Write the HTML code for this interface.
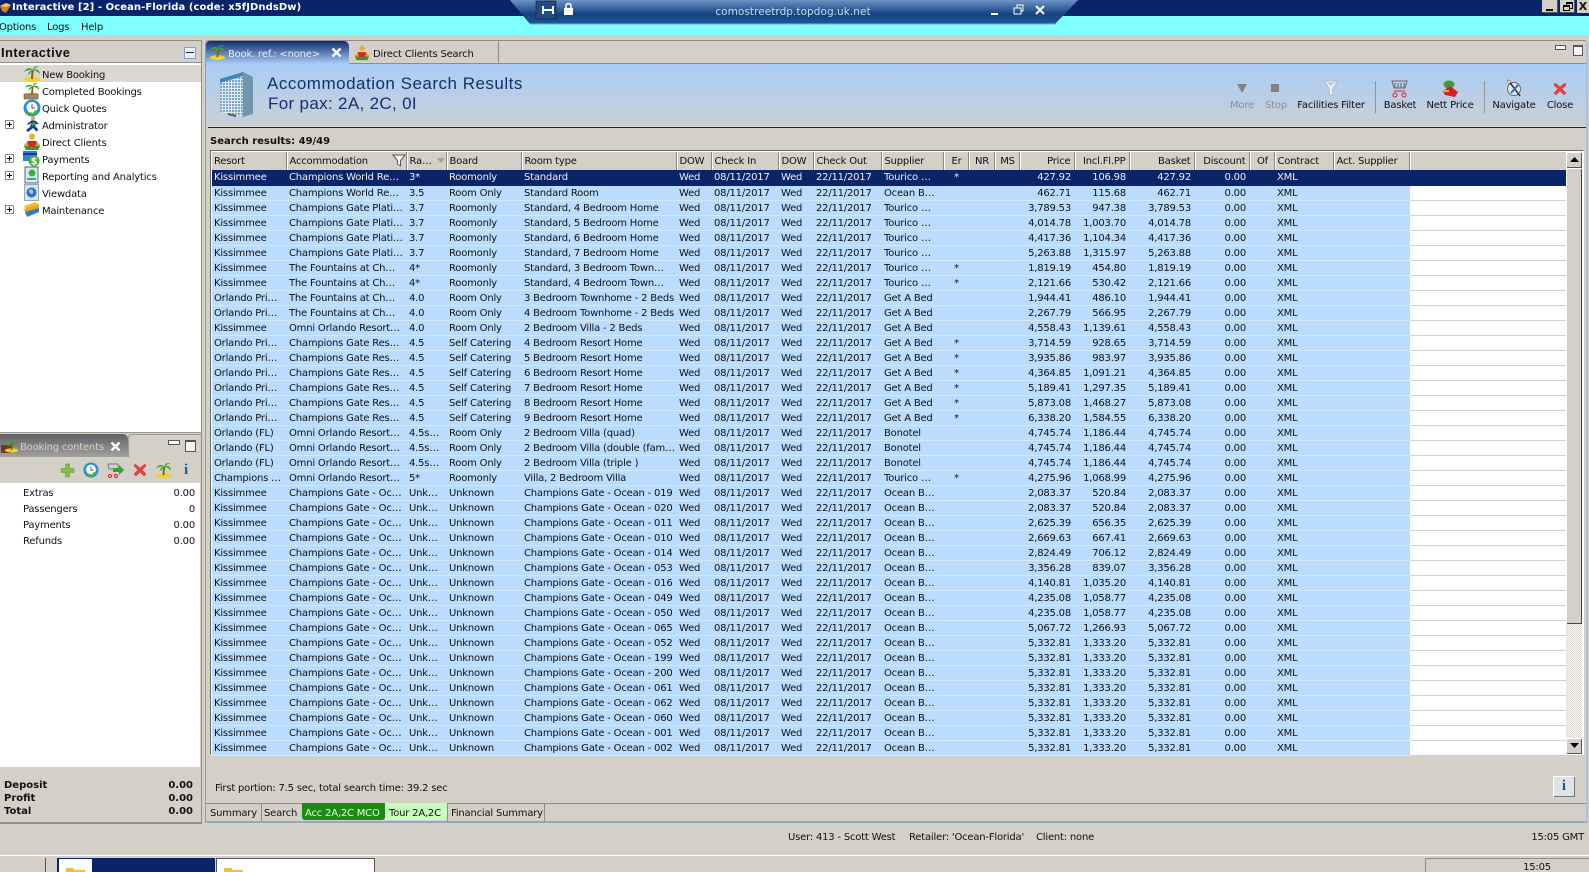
<!DOCTYPE html>
<html><head><meta charset="utf-8"><title>Interactive</title>
<style>
html,body{margin:0;padding:0;width:1589px;height:872px;overflow:hidden;background:#d4d0c8}
body{position:relative;font:10px/13px "DejaVu Sans","Liberation Sans",sans-serif;color:#111;letter-spacing:-.2px}
.a{position:absolute;white-space:nowrap}
.b{font-weight:bold;letter-spacing:0}
.c{transform:translateX(-50%)}
.r{text-align:right}
svg{position:absolute;overflow:visible}
#t{position:absolute;left:212px;top:152px;width:1355px;border-collapse:collapse;table-layout:fixed;font-size:10px}
#t th{height:18px;padding:4px 0 0 2px;line-height:12px;vertical-align:top;font-weight:normal;text-align:left;background:#d4d0c8;border-right:1px solid #fff;box-shadow:inset -1px 0 0 #8a8880;box-sizing:border-box;overflow:hidden;white-space:nowrap}
#t td{height:15px;padding:2px 0 0 2px;line-height:12px;vertical-align:top;background:#b9dcff;border-bottom:1px solid #d5e8fb;box-sizing:border-box;overflow:hidden;white-space:nowrap}
#t td:nth-child(11){text-align:center;padding-left:0}
#t td:nth-child(n+14):nth-child(-n+17),#t th:nth-child(n+14):nth-child(-n+17){text-align:right;padding-right:4px}
#t td:nth-child(21){background:#fff;border-bottom:1px solid #d4d0c8}
#t tr.s td{background:#0a246a!important;color:#f0f0f0;border-bottom-color:#0a246a}
</style></head><body>
<svg width="0" height="0" style="position:absolute"><defs>
<symbol id="palm" viewBox="0 0 18 18"><ellipse cx="9" cy="15.500" rx="8" ry="2.500" fill="#f3d21c"/><path d="M9 15C9 11 9.500 8 10 6" stroke="#8a5a20" stroke-width="2" fill="none"/><path d="M10 6C7 3 3 4 1 8 4 6 7 6 10 6ZM10 6C10 3 13 1 16 3 13 3 12 4 10 6ZM10 6C13 4 17 6 17 10 15 8 13 7 10 6ZM10 6C8 6 5 8 5 11 7 9 9 8 10 6Z" fill="#3fa62a"/></symbol>
<symbol id="person" viewBox="0 0 18 18"><circle cx="9" cy="3.500" r="3" fill="#f0a830"/><path d="M1 13C1 7 17 7 17 13L15 17H3Z" fill="#e8a020"/><path d="M4 8H14L12 14H6Z" fill="#d82818"/><path d="M1 13H6L9 15 12 13H17L15 17H3Z" fill="#2f9a3a"/></symbol>
<symbol id="clock" viewBox="0 0 18 18"><circle cx="9" cy="9" r="8.500" fill="#2f8fd8"/><circle cx="9" cy="8.500" r="5.500" fill="#fff"/><path d="M9 5V9H12" stroke="#555" fill="none"/><path d="M3 13C6 17.500 12 17.500 15.500 12.500L12.500 11 10 14 6 13Z" fill="#4db030"/></symbol>
<symbol id="x" viewBox="0 0 14 14"><path d="M2 1L7 5 12 1 13 3 9 7 13 11 11 13 7 9 3 13 1 11 5 7 1 3Z" fill="#e84040" stroke="#c83030" stroke-width=".5"/></symbol>
<symbol id="folder" viewBox="0 0 20 16"><path d="M0 3H7L9 5H19V16H0Z" fill="#eac23c"/><path d="M1 7H20L18 16H0Z" fill="#fbe07a"/></symbol>
<pattern id="win" width="3" height="3" patternUnits="userSpaceOnUse"><rect width="3" height="3" fill="#dfeaf2"/><rect width="2" height="2" fill="#7aa5c4"/></pattern>
</defs></svg>

<!-- title bar -->
<div class="a" style="left:0;top:0;width:1589px;height:16px;background:#0a246a"></div>
<svg style="left:0;top:1px" width="12" height="13"><path d="M0 5L6 2 11 4 6 12 2 10Z" fill="#d87a20"/><path d="M0 5L6 2 11 4 6 6Z" fill="#f2c070"/></svg>
<div class="a b" style="left:12px;top:1px;color:#fff;font-size:10px;line-height:13px;letter-spacing:.08px">Interactive [2] - Ocean-Florida (code: x5fJDndsDw)</div>
<div class="a" style="left:1542px;top:0;width:16px;height:13px;background:#d4d0c8;box-shadow:inset -1px -1px #555"><div class="a" style="left:4px;top:9px;width:7px;height:2px;background:#000"></div></div>
<div class="a" style="left:1560px;top:0;width:15px;height:13px;background:#d4d0c8;box-shadow:inset -1px -1px #555"><div class="a" style="left:6px;top:2px;width:5px;height:4px;border:1px solid #000;border-top-width:2px"></div><div class="a" style="left:3px;top:5px;width:5px;height:3px;border:1px solid #000;border-top-width:2px;background:#d4d0c8"></div></div>
<div class="a b" style="left:1577px;top:0;width:12px;height:13px;background:#d4d0c8;font-size:11px;line-height:13px;text-align:center">X</div>

<!-- menu -->
<div class="a" style="left:0;top:16px;width:1589px;height:19px;background:#80ffff"></div>
<div class="a" style="left:-1px;top:21px">Options</div>
<div class="a" style="left:47px;top:21px">Logs</div>
<div class="a" style="left:81px;top:21px">Help</div>

<!-- connection bar -->
<svg style="left:0;top:0" width="1589" height="26"><defs><linearGradient id="cb" x1="0" y1="0" x2="0" y2="1"><stop offset="0" stop-color="#6d92c4"/><stop offset=".6" stop-color="#134080"/><stop offset="1" stop-color="#1d5a98"/></linearGradient></defs><path d="M510 0H1078L1055 24H530Z" fill="url(#cb)"/><path d="M530 24H1055" stroke="#8ab" stroke-width="1"/><rect x="536" y="1" width="20" height="18" fill="#234a86" stroke="#123" stroke-width=".6"/><path d="M543 6V14M553 6V14M543 10H553" stroke="#fff" stroke-width="2"/><rect x="564" y="8" width="9" height="7" fill="#fff"/><path d="M566 8V5.500C566 3 571 3 571 5.500V8" stroke="#fff" stroke-width="1.500" fill="none"/><path d="M991 14H998" stroke="#fff" stroke-width="2"/><path d="M1014 8H1021V14H1014Z" fill="none" stroke="#fff"/><path d="M1017 8V5H1023V11H1021" fill="none" stroke="#fff"/><path d="M1036 6L1044 14M1044 6L1036 14" stroke="#fff" stroke-width="2"/></svg>
<div class="a c" style="left:793px;top:6px;color:#c8daf0;font-size:10.5px;letter-spacing:.05px">comostreetrdp.topdog.uk.net</div>

<!-- left panel -->
<div class="a" style="left:0;top:40px;width:201px;height:23px;background:#d4d0c8;border-top:1px solid #8f8d86;border-bottom:1px solid #8f8d86;box-sizing:border-box"></div>
<div class="a" style="left:0;top:63px;width:201px;height:371px;background:#fff"></div>
<div class="a" style="left:201px;top:40px;width:1px;height:783px;background:#8f8d86"></div>
<div class="a b" style="left:1px;top:45px;font-size:13px;line-height:16px;color:#111;font-family:'Liberation Sans',sans-serif;letter-spacing:.4px">Interactive</div>
<div class="a" style="left:184px;top:47px;width:10px;height:10px;border:1px solid #7ea0c8;background:#e8eef5"><div class="a" style="left:1px;top:4px;width:8px;height:1px;background:#222"></div></div>
<div class="a" style="left:0;top:65px;width:201px;height:17px;background:#dbd8d1"></div>
<svg style="left:23px;top:64px" width="18" height="18"><use href="#palm" width="18" height="18"/></svg>
<svg style="left:23px;top:81px" width="18" height="18"><use href="#palm" width="18" height="16"/><rect x="1" y="13" width="14" height="5" fill="#a08a60" stroke="#444" stroke-width=".5"/></svg>
<svg style="left:23px;top:99px" width="18" height="18"><use href="#clock" width="18" height="18"/></svg>
<svg style="left:25px;top:116px" width="15" height="17"><path d="M7 4L11 5 14 8 11 8 10 10 13 13 12 16 8 12 3 16 1 14 5 11 6 7 3 9 2 8Z" fill="#1a3f90"/><path d="M6 7L10 6 11 9 7 10Z" fill="#3f9a3a"/><circle cx="8" cy="2.500" r="2" fill="#e0a070"/></svg>
<svg style="left:23px;top:133px" width="18" height="18"><use href="#person" width="18" height="18"/></svg>
<svg style="left:23px;top:150px" width="17" height="17"><rect x="0" y="1" width="14" height="10" fill="#2f7fd8"/><rect x="0" y="3" width="14" height="2" fill="#0f3f90"/><circle cx="11" cy="11" r="5.500" fill="#4db030"/><text x="11" y="14.500" font-size="10" text-anchor="middle" fill="#fff" font-weight="bold">$</text></svg>
<svg style="left:24px;top:167px" width="15" height="17"><rect x="1" y="0" width="13" height="16" fill="#dfe8f2" stroke="#567"/><circle cx="8" cy="6" r="3.500" fill="#3fae3f"/><rect x="3" y="11" width="9" height="2" fill="#3a7"/></svg>
<svg style="left:24px;top:184px" width="15" height="17"><rect x=".5" y=".5" width="14" height="16" fill="#d8e2ee" stroke="#9aa"/><circle cx="7.500" cy="8.500" r="5" fill="#2f70c0"/><path d="M5 6C7 4 10 6 9 9 7 11 5 9 5 6Z" fill="#a0c8e8"/></svg>
<svg style="left:23px;top:201px" width="17" height="17"><path d="M1 5L12 1 16 3 3 8Z" fill="#f0c030"/><path d="M1 8L16 3V9L3 14Z" fill="#e8a820"/><path d="M2 11L16 7V11L4 16Z" fill="#2f80c0"/></svg>
<div class="a" style="left:42px;top:69px">New Booking</div>
<div class="a" style="left:42px;top:86px">Completed Bookings</div>
<div class="a" style="left:42px;top:103px">Quick Quotes</div>
<div class="a" style="left:42px;top:120px">Administrator</div>
<div class="a" style="left:42px;top:137px">Direct Clients</div>
<div class="a" style="left:42px;top:154px">Payments</div>
<div class="a" style="left:42px;top:171px">Reporting and Analytics</div>
<div class="a" style="left:42px;top:188px">Viewdata</div>
<div class="a" style="left:42px;top:205px">Maintenance</div>
<svg style="left:5px;top:120px" width="9" height="95"><g fill="#fff" stroke="#8a8a8a"><rect x=".5" y=".5" width="8" height="8"/><rect x=".5" y="34.500" width="8" height="8"/><rect x=".5" y="51.500" width="8" height="8"/><rect x=".5" y="85.500" width="8" height="8"/></g><path d="M2 4.500H7M4.500 2V7M2 38.500H7M4.500 36V41M2 55.500H7M4.500 53V58M2 89.500H7M4.500 87V92" stroke="#000"/></svg>

<!-- booking contents -->
<div class="a" style="left:0;top:432px;width:201px;height:51px;background:#d4d0c8;border-top:1px solid #9a9890;box-sizing:border-box"></div>
<div class="a" style="left:0;top:434px;width:128px;height:23px;background:linear-gradient(#5e6066,#a3a29e);border-radius:0 5px 0 0"></div>
<div class="a" style="left:128px;top:434px;width:73px;height:23px;border-top:1px solid #9a9890;border-left:1px solid #9a9890;box-sizing:border-box;border-radius:4px 0 0 0"></div>
<svg style="left:1px;top:437px" width="17" height="17"><rect x="0" y="8" width="10" height="8" fill="#6a3a1a"/><use href="#palm" x="3" y="0" width="15" height="16"/></svg>
<div class="a" style="left:20px;top:441px;color:#d4d0c8">Booking contents</div>
<svg style="left:110px;top:441px" width="11" height="11"><path d="M1.500 1.500L9.500 9.500M9.500 1.500L1.500 9.500" stroke="#fff" stroke-width="2.500"/></svg>
<div class="a" style="left:168px;top:440px;width:10px;height:3px;border:1px solid #555;background:#fff"></div>
<div class="a" style="left:185px;top:440px;width:9px;height:9px;border:1px solid #555;border-top-width:2px;background:#f5f5f5"></div>
<svg style="left:61px;top:464px" width="13" height="13"><path d="M4.500 0H8.500V4.500H13V8.500H8.500V13H4.500V8.500H0V4.500H4.500Z" fill="#7fbf4a" stroke="#5f8f3a" stroke-width=".5"/></svg>
<svg style="left:83px;top:462px" width="16" height="16"><use href="#clock" width="16" height="16"/></svg>
<svg style="left:107px;top:463px" width="17" height="15"><path d="M1 1H11V6H2Z" fill="none" stroke="#777"/><circle cx="3" cy="13" r="1.500" fill="none" stroke="#d22"/><circle cx="9" cy="13" r="1.500" fill="none" stroke="#d22"/><path d="M6 5H12V2L17 7 12 12V9H6Z" fill="#2da52d"/></svg>
<svg style="left:133px;top:463px" width="14" height="14"><use href="#x" width="14" height="14"/></svg>
<svg style="left:155px;top:461px" width="17" height="17"><use href="#palm" width="17" height="17"/></svg>
<div class="a b" style="left:184px;top:462px;font:bold 15px/16px 'Liberation Serif',serif;color:#1560a8">i</div>
<div class="a" style="left:0;top:483px;width:200px;height:284px;background:#fff"></div>
<div class="a" style="left:23px;top:487px">Extras</div><div class="a r" style="right:1394px;top:487px">0.00</div>
<div class="a" style="left:23px;top:503px">Passengers</div><div class="a r" style="right:1394px;top:503px">0</div>
<div class="a" style="left:23px;top:519px">Payments</div><div class="a r" style="right:1394px;top:519px">0.00</div>
<div class="a" style="left:23px;top:535px">Refunds</div><div class="a r" style="right:1394px;top:535px">0.00</div>
<div class="a b" style="left:4px;top:779px">Deposit</div><div class="a b r" style="right:1396px;top:779px">0.00</div>
<div class="a b" style="left:4px;top:792px">Profit</div><div class="a b r" style="right:1396px;top:792px">0.00</div>
<div class="a b" style="left:4px;top:805px">Total</div><div class="a b r" style="right:1396px;top:805px">0.00</div>
<div class="a" style="left:0;top:822px;width:202px;height:2px;background:#8f8d86"></div>

<!-- right panel -->
<div class="a" style="left:205px;top:40px;width:1383px;height:783px;border:1px solid #8f9db5;border-top-color:#8f8d86;border-right:2px solid #a4c2e4;border-bottom:2px solid #93a8c4;box-sizing:border-box;border-radius:4px 4px 0 0"></div>
<div class="a" style="left:206px;top:63px;width:1380px;height:1px;background:#8f8d86"></div>
<div class="a" style="left:206px;top:41px;width:143px;height:23px;background:linear-gradient(#0f2c70,#a9cdf6);border-radius:4px 5px 0 0"></div>
<div class="a" style="left:498px;top:41px;width:1px;height:22px;background:#8f8d86"></div>
<svg style="left:209px;top:43px" width="17" height="17"><use href="#palm" width="17" height="17"/></svg>
<div class="a" style="left:228px;top:48px;color:#e8eef8">Book. ref.: &lt;none&gt;</div>
<svg style="left:331px;top:47px" width="11" height="11"><path d="M1.500 1.500L9.500 9.500M9.500 1.500L1.500 9.500" stroke="#fff" stroke-width="2.500"/></svg>
<svg style="left:354px;top:45px" width="16" height="16"><use href="#person" width="16" height="16"/></svg>
<div class="a" style="left:373px;top:48px">Direct Clients Search</div>
<div class="a" style="left:1555px;top:45px;width:9px;height:3px;border:1px solid #555;background:#fff"></div>
<div class="a" style="left:1573px;top:45px;width:8px;height:8px;border:1px solid #555;border-top-width:2px;background:#f5f5f5"></div>

<div class="a" style="left:206px;top:64px;width:1380px;height:62px;background:linear-gradient(#a9cdf6,#c9cfd6)"></div>
<div class="a" style="left:208px;top:127px;width:1378px;height:1px;background:#0a246a"></div>
<svg style="left:220px;top:71px" width="34" height="48"><path d="M0 8L23 1V46L0 41Z" fill="url(#win)"/><path d="M0 8L23 1V5L0 12Z" fill="#3f86b8"/><path d="M23 1L33 6V43L23 46Z" fill="#6f96ae"/><path d="M8 42L16 44V46L8 44Z" fill="#556"/></svg>
<div class="a" style="left:267px;top:74px;font:17px/20px 'Liberation Sans',sans-serif;color:#15306f;letter-spacing:.5px">Accommodation Search Results</div>
<div class="a" style="left:268px;top:94px;font:17px/20px 'Liberation Sans',sans-serif;color:#15306f;letter-spacing:.33px">For pax: 2A, 2C, 0I</div>

<svg style="left:1236px;top:83px" width="12" height="11"><path d="M1 1H11L6 10Z" fill="#7f8488"/></svg>
<div class="a" style="left:1271px;top:84px;width:8px;height:8px;background:#7f8488"></div>
<svg style="left:1324px;top:80px" width="14" height="18"><path d="M1 2L7 0 13 2 8.500 9V16L5.500 14V9Z" fill="#eef1f4" stroke="#aeb4ba" stroke-width=".7"/><path d="M3 3L7 1 11 3 7 6Z" fill="#c4ccd4"/></svg>
<svg style="left:1391px;top:80px" width="18" height="18"><path d="M1 1H16L14 8H3Z" fill="none" stroke="#666"/><path d="M4 3V8M7 3V8M10 3V8M13 3V8" stroke="#666"/><path d="M3 11H14" stroke="#d22"/><circle cx="4" cy="15" r="2" fill="none" stroke="#d22"/><circle cx="13" cy="15" r="2" fill="none" stroke="#d22"/></svg>
<svg style="left:1441px;top:80px" width="18" height="18"><ellipse cx="8" cy="4.500" rx="5.500" ry="4" fill="#3f9a3a"/><path d="M2 11L9 6 17 12 14 17 4 15Z" fill="#d81c2c"/><rect x="3" y="10" width="5" height="2" fill="#f0b020"/></svg>
<svg style="left:1505px;top:79px" width="18" height="19"><circle cx="9" cy="10" r="6.500" fill="#dfe8f0" stroke="#667"/><path d="M3 1L15 17" stroke="#333" stroke-width="1.500"/><path d="M13 6L6 14" stroke="#2a70c8" stroke-width="2"/><path d="M2 1L6 2 4 5Z" fill="#eee" stroke="#666" stroke-width=".5"/></svg>
<svg style="left:1553px;top:82px" width="14" height="14"><use href="#x" width="14" height="14"/></svg>
<div class="a c" style="left:1242px;top:99px;color:#8a8e92">More</div>
<div class="a c" style="left:1276px;top:99px;color:#8a8e92">Stop</div>
<div class="a c" style="left:1331px;top:99px">Facilities Filter</div>
<div class="a" style="left:1375px;top:81px;width:1px;height:32px;background:#8f949a"></div>
<div class="a c" style="left:1400px;top:99px">Basket</div>
<div class="a c" style="left:1450px;top:99px">Nett Price</div>
<div class="a" style="left:1484px;top:81px;width:1px;height:32px;background:#8f949a"></div>
<div class="a c" style="left:1514px;top:99px">Navigate</div>
<div class="a c" style="left:1560px;top:99px">Close</div>

<div class="a b" style="left:210px;top:135px">Search results: 49/49</div>

<!-- table -->
<div class="a" style="left:210px;top:150px;width:1374px;height:605px;background:#fff;border:1px solid #6a6a64;border-right-color:#fff;border-bottom-color:#fff;box-sizing:border-box"></div>
<table id="t">
<colgroup><col style="width:75px"><col style="width:120px"><col style="width:40px"><col style="width:75px"><col style="width:155px"><col style="width:35px"><col style="width:67px"><col style="width:35px"><col style="width:68px"><col style="width:62px"><col style="width:25px"><col style="width:26px"><col style="width:25px"><col style="width:55px"><col style="width:55px"><col style="width:65px"><col style="width:55px"><col style="width:25px"><col style="width:59px"><col style="width:76px"><col style="width:157px"></colgroup>
<thead><tr><th>Resort</th><th>Accommodation</th><th>Ra…</th><th>Board</th><th>Room type</th><th>DOW</th><th>Check In</th><th>DOW</th><th>Check Out</th><th>Supplier</th><th style="text-align:center;padding-left:0">Er</th><th style="text-align:center;padding-left:0">NR</th><th style="text-align:center;padding-left:0">MS</th><th>Price</th><th>Incl.Fl.PP</th><th>Basket</th><th>Discount</th><th style="text-align:center;padding-left:0">Of</th><th>Contract</th><th>Act. Supplier</th><th></th></tr></thead>
<tbody>
<tr class="s"><td>Kissimmee<td>Champions World Re…<td>3*<td>Roomonly<td>Standard<td>Wed<td>08/11/2017<td>Wed<td>22/11/2017<td>Tourico …<td>*<td><td><td>427.92<td>106.98<td>427.92<td>0.00<td><td>XML<td><td></tr>
<tr><td>Kissimmee<td>Champions World Re…<td>3.5<td>Room Only<td>Standard Room<td>Wed<td>08/11/2017<td>Wed<td>22/11/2017<td>Ocean B…<td><td><td><td>462.71<td>115.68<td>462.71<td>0.00<td><td>XML<td><td></tr>
<tr><td>Kissimmee<td>Champions Gate Plati…<td>3.7<td>Roomonly<td>Standard, 4 Bedroom Home<td>Wed<td>08/11/2017<td>Wed<td>22/11/2017<td>Tourico …<td><td><td><td>3,789.53<td>947.38<td>3,789.53<td>0.00<td><td>XML<td><td></tr>
<tr><td>Kissimmee<td>Champions Gate Plati…<td>3.7<td>Roomonly<td>Standard, 5 Bedroom Home<td>Wed<td>08/11/2017<td>Wed<td>22/11/2017<td>Tourico …<td><td><td><td>4,014.78<td>1,003.70<td>4,014.78<td>0.00<td><td>XML<td><td></tr>
<tr><td>Kissimmee<td>Champions Gate Plati…<td>3.7<td>Roomonly<td>Standard, 6 Bedroom Home<td>Wed<td>08/11/2017<td>Wed<td>22/11/2017<td>Tourico …<td><td><td><td>4,417.36<td>1,104.34<td>4,417.36<td>0.00<td><td>XML<td><td></tr>
<tr><td>Kissimmee<td>Champions Gate Plati…<td>3.7<td>Roomonly<td>Standard, 7 Bedroom Home<td>Wed<td>08/11/2017<td>Wed<td>22/11/2017<td>Tourico …<td><td><td><td>5,263.88<td>1,315.97<td>5,263.88<td>0.00<td><td>XML<td><td></tr>
<tr><td>Kissimmee<td>The Fountains at Ch…<td>4*<td>Roomonly<td>Standard, 3 Bedroom Town…<td>Wed<td>08/11/2017<td>Wed<td>22/11/2017<td>Tourico …<td>*<td><td><td>1,819.19<td>454.80<td>1,819.19<td>0.00<td><td>XML<td><td></tr>
<tr><td>Kissimmee<td>The Fountains at Ch…<td>4*<td>Roomonly<td>Standard, 4 Bedroom Town…<td>Wed<td>08/11/2017<td>Wed<td>22/11/2017<td>Tourico …<td>*<td><td><td>2,121.66<td>530.42<td>2,121.66<td>0.00<td><td>XML<td><td></tr>
<tr><td>Orlando Pri…<td>The Fountains at Ch…<td>4.0<td>Room Only<td>3 Bedroom Townhome - 2 Beds<td>Wed<td>08/11/2017<td>Wed<td>22/11/2017<td>Get A Bed<td><td><td><td>1,944.41<td>486.10<td>1,944.41<td>0.00<td><td>XML<td><td></tr>
<tr><td>Orlando Pri…<td>The Fountains at Ch…<td>4.0<td>Room Only<td>4 Bedroom Townhome - 2 Beds<td>Wed<td>08/11/2017<td>Wed<td>22/11/2017<td>Get A Bed<td><td><td><td>2,267.79<td>566.95<td>2,267.79<td>0.00<td><td>XML<td><td></tr>
<tr><td>Kissimmee<td>Omni Orlando Resort…<td>4.0<td>Room Only<td>2 Bedroom Villa - 2 Beds<td>Wed<td>08/11/2017<td>Wed<td>22/11/2017<td>Get A Bed<td><td><td><td>4,558.43<td>1,139.61<td>4,558.43<td>0.00<td><td>XML<td><td></tr>
<tr><td>Orlando Pri…<td>Champions Gate Res…<td>4.5<td>Self Catering<td>4 Bedroom Resort Home<td>Wed<td>08/11/2017<td>Wed<td>22/11/2017<td>Get A Bed<td>*<td><td><td>3,714.59<td>928.65<td>3,714.59<td>0.00<td><td>XML<td><td></tr>
<tr><td>Orlando Pri…<td>Champions Gate Res…<td>4.5<td>Self Catering<td>5 Bedroom Resort Home<td>Wed<td>08/11/2017<td>Wed<td>22/11/2017<td>Get A Bed<td>*<td><td><td>3,935.86<td>983.97<td>3,935.86<td>0.00<td><td>XML<td><td></tr>
<tr><td>Orlando Pri…<td>Champions Gate Res…<td>4.5<td>Self Catering<td>6 Bedroom Resort Home<td>Wed<td>08/11/2017<td>Wed<td>22/11/2017<td>Get A Bed<td>*<td><td><td>4,364.85<td>1,091.21<td>4,364.85<td>0.00<td><td>XML<td><td></tr>
<tr><td>Orlando Pri…<td>Champions Gate Res…<td>4.5<td>Self Catering<td>7 Bedroom Resort Home<td>Wed<td>08/11/2017<td>Wed<td>22/11/2017<td>Get A Bed<td>*<td><td><td>5,189.41<td>1,297.35<td>5,189.41<td>0.00<td><td>XML<td><td></tr>
<tr><td>Orlando Pri…<td>Champions Gate Res…<td>4.5<td>Self Catering<td>8 Bedroom Resort Home<td>Wed<td>08/11/2017<td>Wed<td>22/11/2017<td>Get A Bed<td>*<td><td><td>5,873.08<td>1,468.27<td>5,873.08<td>0.00<td><td>XML<td><td></tr>
<tr><td>Orlando Pri…<td>Champions Gate Res…<td>4.5<td>Self Catering<td>9 Bedroom Resort Home<td>Wed<td>08/11/2017<td>Wed<td>22/11/2017<td>Get A Bed<td>*<td><td><td>6,338.20<td>1,584.55<td>6,338.20<td>0.00<td><td>XML<td><td></tr>
<tr><td>Orlando (FL)<td>Omni Orlando Resort…<td>4.5s…<td>Room Only<td>2 Bedroom Villa (quad)<td>Wed<td>08/11/2017<td>Wed<td>22/11/2017<td>Bonotel<td><td><td><td>4,745.74<td>1,186.44<td>4,745.74<td>0.00<td><td>XML<td><td></tr>
<tr><td>Orlando (FL)<td>Omni Orlando Resort…<td>4.5s…<td>Room Only<td>2 Bedroom Villa (double (fam…<td>Wed<td>08/11/2017<td>Wed<td>22/11/2017<td>Bonotel<td><td><td><td>4,745.74<td>1,186.44<td>4,745.74<td>0.00<td><td>XML<td><td></tr>
<tr><td>Orlando (FL)<td>Omni Orlando Resort…<td>4.5s…<td>Room Only<td>2 Bedroom Villa (triple )<td>Wed<td>08/11/2017<td>Wed<td>22/11/2017<td>Bonotel<td><td><td><td>4,745.74<td>1,186.44<td>4,745.74<td>0.00<td><td>XML<td><td></tr>
<tr><td>Champions …<td>Omni Orlando Resort…<td>5*<td>Roomonly<td>Villa, 2 Bedroom Villa<td>Wed<td>08/11/2017<td>Wed<td>22/11/2017<td>Tourico …<td>*<td><td><td>4,275.96<td>1,068.99<td>4,275.96<td>0.00<td><td>XML<td><td></tr>
<tr><td>Kissimmee<td>Champions Gate - Oc…<td>Unk…<td>Unknown<td>Champions Gate - Ocean - 019<td>Wed<td>08/11/2017<td>Wed<td>22/11/2017<td>Ocean B…<td><td><td><td>2,083.37<td>520.84<td>2,083.37<td>0.00<td><td>XML<td><td></tr>
<tr><td>Kissimmee<td>Champions Gate - Oc…<td>Unk…<td>Unknown<td>Champions Gate - Ocean - 020<td>Wed<td>08/11/2017<td>Wed<td>22/11/2017<td>Ocean B…<td><td><td><td>2,083.37<td>520.84<td>2,083.37<td>0.00<td><td>XML<td><td></tr>
<tr><td>Kissimmee<td>Champions Gate - Oc…<td>Unk…<td>Unknown<td>Champions Gate - Ocean - 011<td>Wed<td>08/11/2017<td>Wed<td>22/11/2017<td>Ocean B…<td><td><td><td>2,625.39<td>656.35<td>2,625.39<td>0.00<td><td>XML<td><td></tr>
<tr><td>Kissimmee<td>Champions Gate - Oc…<td>Unk…<td>Unknown<td>Champions Gate - Ocean - 010<td>Wed<td>08/11/2017<td>Wed<td>22/11/2017<td>Ocean B…<td><td><td><td>2,669.63<td>667.41<td>2,669.63<td>0.00<td><td>XML<td><td></tr>
<tr><td>Kissimmee<td>Champions Gate - Oc…<td>Unk…<td>Unknown<td>Champions Gate - Ocean - 014<td>Wed<td>08/11/2017<td>Wed<td>22/11/2017<td>Ocean B…<td><td><td><td>2,824.49<td>706.12<td>2,824.49<td>0.00<td><td>XML<td><td></tr>
<tr><td>Kissimmee<td>Champions Gate - Oc…<td>Unk…<td>Unknown<td>Champions Gate - Ocean - 053<td>Wed<td>08/11/2017<td>Wed<td>22/11/2017<td>Ocean B…<td><td><td><td>3,356.28<td>839.07<td>3,356.28<td>0.00<td><td>XML<td><td></tr>
<tr><td>Kissimmee<td>Champions Gate - Oc…<td>Unk…<td>Unknown<td>Champions Gate - Ocean - 016<td>Wed<td>08/11/2017<td>Wed<td>22/11/2017<td>Ocean B…<td><td><td><td>4,140.81<td>1,035.20<td>4,140.81<td>0.00<td><td>XML<td><td></tr>
<tr><td>Kissimmee<td>Champions Gate - Oc…<td>Unk…<td>Unknown<td>Champions Gate - Ocean - 049<td>Wed<td>08/11/2017<td>Wed<td>22/11/2017<td>Ocean B…<td><td><td><td>4,235.08<td>1,058.77<td>4,235.08<td>0.00<td><td>XML<td><td></tr>
<tr><td>Kissimmee<td>Champions Gate - Oc…<td>Unk…<td>Unknown<td>Champions Gate - Ocean - 050<td>Wed<td>08/11/2017<td>Wed<td>22/11/2017<td>Ocean B…<td><td><td><td>4,235.08<td>1,058.77<td>4,235.08<td>0.00<td><td>XML<td><td></tr>
<tr><td>Kissimmee<td>Champions Gate - Oc…<td>Unk…<td>Unknown<td>Champions Gate - Ocean - 065<td>Wed<td>08/11/2017<td>Wed<td>22/11/2017<td>Ocean B…<td><td><td><td>5,067.72<td>1,266.93<td>5,067.72<td>0.00<td><td>XML<td><td></tr>
<tr><td>Kissimmee<td>Champions Gate - Oc…<td>Unk…<td>Unknown<td>Champions Gate - Ocean - 052<td>Wed<td>08/11/2017<td>Wed<td>22/11/2017<td>Ocean B…<td><td><td><td>5,332.81<td>1,333.20<td>5,332.81<td>0.00<td><td>XML<td><td></tr>
<tr><td>Kissimmee<td>Champions Gate - Oc…<td>Unk…<td>Unknown<td>Champions Gate - Ocean - 199<td>Wed<td>08/11/2017<td>Wed<td>22/11/2017<td>Ocean B…<td><td><td><td>5,332.81<td>1,333.20<td>5,332.81<td>0.00<td><td>XML<td><td></tr>
<tr><td>Kissimmee<td>Champions Gate - Oc…<td>Unk…<td>Unknown<td>Champions Gate - Ocean - 200<td>Wed<td>08/11/2017<td>Wed<td>22/11/2017<td>Ocean B…<td><td><td><td>5,332.81<td>1,333.20<td>5,332.81<td>0.00<td><td>XML<td><td></tr>
<tr><td>Kissimmee<td>Champions Gate - Oc…<td>Unk…<td>Unknown<td>Champions Gate - Ocean - 061<td>Wed<td>08/11/2017<td>Wed<td>22/11/2017<td>Ocean B…<td><td><td><td>5,332.81<td>1,333.20<td>5,332.81<td>0.00<td><td>XML<td><td></tr>
<tr><td>Kissimmee<td>Champions Gate - Oc…<td>Unk…<td>Unknown<td>Champions Gate - Ocean - 062<td>Wed<td>08/11/2017<td>Wed<td>22/11/2017<td>Ocean B…<td><td><td><td>5,332.81<td>1,333.20<td>5,332.81<td>0.00<td><td>XML<td><td></tr>
<tr><td>Kissimmee<td>Champions Gate - Oc…<td>Unk…<td>Unknown<td>Champions Gate - Ocean - 060<td>Wed<td>08/11/2017<td>Wed<td>22/11/2017<td>Ocean B…<td><td><td><td>5,332.81<td>1,333.20<td>5,332.81<td>0.00<td><td>XML<td><td></tr>
<tr><td>Kissimmee<td>Champions Gate - Oc…<td>Unk…<td>Unknown<td>Champions Gate - Ocean - 001<td>Wed<td>08/11/2017<td>Wed<td>22/11/2017<td>Ocean B…<td><td><td><td>5,332.81<td>1,333.20<td>5,332.81<td>0.00<td><td>XML<td><td></tr>
<tr><td>Kissimmee<td>Champions Gate - Oc…<td>Unk…<td>Unknown<td>Champions Gate - Ocean - 002<td>Wed<td>08/11/2017<td>Wed<td>22/11/2017<td>Ocean B…<td><td><td><td>5,332.81<td>1,333.20<td>5,332.81<td>0.00<td><td>XML<td><td></tr>
</tbody></table>
<svg style="left:392px;top:154px" width="14" height="13"><path d="M1 1H13L8.500 6.500V12L5.500 10V6.500Z" fill="#fff" stroke="#555"/></svg>
<svg style="left:437px;top:158px" width="8" height="5"><path d="M0 0H8L4 5Z" fill="#a5a39c"/></svg>

<!-- scrollbar -->
<div class="a" style="left:1566px;top:152px;width:16px;height:602px;background:repeating-conic-gradient(#fff 0 25%,#d4d0c8 0 50%) 0 0/2px 2px"></div>
<div class="a" style="left:1566px;top:152px;width:16px;height:16px;background:#d4d0c8;box-shadow:inset 1px 1px #fff,inset -1px -1px #555"></div>
<svg style="left:1570px;top:157px" width="9" height="5"><path d="M4.500 0L9 5H0Z" fill="#000"/></svg>
<div class="a" style="left:1566px;top:168px;width:16px;height:456px;background:#d4d0c8;box-shadow:inset 1px 1px #fff,inset -1px -1px #444"></div>
<div class="a" style="left:1566px;top:738px;width:16px;height:16px;background:#d4d0c8;box-shadow:inset 1px 1px #fff,inset -1px -1px #555"></div>
<svg style="left:1570px;top:743px" width="9" height="5"><path d="M0 0H9L4.500 5Z" fill="#000"/></svg>

<div class="a" style="left:215px;top:782px">First portion: 7.5 sec, total search time: 39.2 sec</div>
<div class="a b" style="left:1553px;top:776px;width:22px;height:21px;background:#dfe3e6;box-shadow:inset 1px 1px #fff,inset -1px -1px #777;font:bold 15px/21px 'Liberation Serif',serif;text-align:center;color:#15549c">i</div>

<!-- bottom tabs -->
<div class="a" style="left:206px;top:803px;width:1380px;height:1px;background:#8f8d86"></div>
<div class="a" style="left:302px;top:803px;width:83px;height:17px;background:#1d8a14;border-radius:0 0 3px 3px"></div>
<div class="a" style="left:385px;top:803px;width:62px;height:17px;background:#c8fbc0"></div>
<div class="a" style="left:261px;top:804px;width:1px;height:17px;background:#8f8d86"></div>
<div class="a" style="left:447px;top:804px;width:1px;height:17px;background:#8f8d86"></div>
<div class="a" style="left:544px;top:804px;width:1px;height:17px;background:#8f8d86"></div>
<div class="a" style="left:210px;top:807px">Summary</div>
<div class="a" style="left:264px;top:807px">Search</div>
<div class="a" style="left:305px;top:807px;color:#e4ffe0">Acc 2A,2C MCO</div>
<div class="a" style="left:389px;top:807px">Tour 2A,2C</div>
<div class="a" style="left:451px;top:807px">Financial Summary</div>

<!-- status -->
<div class="a" style="left:788px;top:831px">User: 413 - Scott West</div>
<div class="a" style="left:909px;top:831px">Retailer: 'Ocean-Florida'</div>
<div class="a" style="left:1036px;top:831px">Client: none</div>
<div class="a r" style="right:5px;top:831px">15:05 GMT</div>

<!-- taskbar -->
<div class="a" style="left:0;top:855px;width:1589px;height:1px;background:#fff"></div>
<div class="a" style="left:0;top:858px;width:46px;height:14px;border-right:1px solid #555;box-sizing:border-box"></div>
<div class="a" style="left:57px;top:858px;width:158px;height:14px;background:#0a246a"><div class="a" style="left:2px;top:1px;width:33px;height:13px;background:#fff"></div></div>
<div class="a" style="left:216px;top:858px;width:159px;height:14px;background:#fff;border:1px solid #555;border-bottom:0;box-sizing:border-box"></div>
<svg style="left:66px;top:865px" width="20" height="8"><use href="#folder" width="20" height="16"/></svg>
<svg style="left:224px;top:865px" width="20" height="8"><use href="#folder" width="20" height="16"/></svg>
<div class="a" style="left:1425px;top:858px;width:164px;height:14px;border:1px solid #8f8d86;border-right:0;border-bottom:0;box-sizing:border-box"></div>
<div class="a c" style="left:1537px;top:861px">15:05</div>
</body></html>
